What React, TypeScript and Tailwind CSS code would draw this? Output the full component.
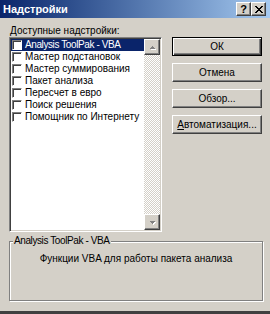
import React from "react";

const ITEMS = [
  "Analysis ToolPak - VBA",
  "Мастер подстановок",
  "Мастер суммирования",
  "Пакет анализа",
  "Пересчет в евро",
  "Поиск решения",
  "Помощник по Интернету",
];

const raised =
  "border border-t-white border-l-white border-r-[#404040] border-b-[#404040] shadow-[inset_-1px_-1px_#808080,inset_1px_1px_#d4d0c8]";

function Check() {
  return (
    <span className="shrink-0 w-[10px] h-[10px] bg-white border border-t-[#808080] border-l-[#808080] border-r-white border-b-white shadow-[inset_1px_1px_#404040]" />
  );
}

function Arrow({ down }: { down?: boolean }) {
  return (
    <div className={`w-[16px] h-[16px] bg-[#d4d0c8] flex items-center justify-center ${raised}`}>
      <svg width="7" height="5" viewBox="0 0 7 5" shapeRendering="crispEdges">
        {down ? (
          <>
            <path d="M1 1h5v1H1zM2 2h3v1H2zM3 3h1v1H3z" fill="#ffffff" transform="translate(1 1)" />
            <path d="M0 0h5v1H0zM1 1h3v1H1zM2 2h1v1H2z" fill="#808080" transform="translate(1 1)" />
          </>
        ) : (
          <>
            <path d="M3 1h1v1H3zM2 2h3v1H2zM1 3h5v1H1z" fill="#ffffff" transform="translate(1 1)" />
            <path d="M2 0h1v1H2zM1 1h3v1H1zM0 2h5v1H0z" fill="#808080" transform="translate(1 1)" />
          </>
        )}
      </svg>
    </div>
  );
}

function Btn({ children, primary }: { children: React.ReactNode; primary?: boolean }) {
  return (
    <button
      className={`h-[19px] w-full bg-[#d4d0c8] text-[10px] leading-none flex items-center justify-center ${
        primary
          ? "border border-black shadow-[inset_1px_1px_#ffffff,inset_-1px_-1px_#404040,inset_-2px_-2px_#808080]"
          : raised
      }`}
    >
      {children}
    </button>
  );
}

export default function App() {
  return (
    <div className="w-[270px] h-[314px] bg-[#d4d0c8] flex flex-col text-black text-[10px] font-['Liberation_Sans',Arial,sans-serif] border-b-[3px] border-b-[#404040]">
      {/* title bar */}
      <div className="h-[18px] shrink-0 flex items-center justify-between pl-[3px] pr-[4px] bg-gradient-to-r from-[#0a246a] to-[#a6caf0]">
        <span className="text-white font-bold text-[11px] leading-none">Надстройки</span>
        <div className="flex">
          <div className={`w-[15px] h-[14px] bg-[#d4d0c8] flex items-center justify-center font-bold text-[11px] leading-none ${raised}`}>
            ?
          </div>
          <div className={`w-[15px] h-[14px] bg-[#d4d0c8] flex items-center justify-center ${raised}`}>
            <svg width="8" height="7" viewBox="0 0 8 7" shapeRendering="crispEdges">
              <path
                d="M0 0h2v1H0zM6 0h2v1H6zM1 1h2v1H1zM5 1h2v1H5zM2 2h4v1H2zM3 3h2v1H3zM2 4h4v1H2zM1 5h2v1H1zM5 5h2v1H5zM0 6h2v1H0zM6 6h2v1H6z"
                fill="#000"
              />
            </svg>
          </div>
        </div>
      </div>

      {/* body */}
      <div className="flex-1 flex flex-col pt-[7px] pl-[9px] pr-[7px]">
        <div className="flex gap-[10px]">
          <div className="w-[153px] flex flex-col">
            <div className="h-[12px] leading-[12px] pl-[1px]">
              <span className="underline">Д</span>оступные надстройки:
            </div>
            <div className="h-[195px] flex bg-white border border-t-[#808080] border-l-[#808080] border-b-white border-r-white shadow-[inset_1px_1px_#404040,inset_-1px_-1px_#d4d0c8] p-[1px]">
              <div className="flex-1 flex flex-col">
                {ITEMS.map((it, i) => (
                  <div
                    key={it}
                    className={`h-[12px] flex items-center gap-[3px] pl-[1px] ${i === 0 ? "bg-[#0a246a] text-white" : ""}`}
                  >
                    <Check />
                    <span className={`leading-none whitespace-nowrap ${i === 0 ? "tracking-[-0.4px]" : ""}`}>{it}</span>
                  </div>
                ))}
              </div>
              <div className="w-[16px] flex flex-col bg-[repeating-conic-gradient(#ffffff_0%_25%,#d4d0c8_0%_50%)] bg-size-[2px_2px]">
                <Arrow />
                <div className="flex-1" />
                <Arrow down />
              </div>
            </div>
          </div>
          <div className="w-[90px] pt-[12px] flex flex-col gap-[7px]">
            <Btn primary>ОК</Btn>
            <Btn>Отмена</Btn>
            <Btn>Обзор...</Btn>
            <Btn>
              <span className="underline">А</span>втоматизация...
            </Btn>
          </div>
        </div>

        <fieldset className="mt-[3px] h-[66px] border border-[#808080] shadow-[1px_1px_#ffffff,inset_1px_1px_#ffffff] px-[2px]">
          <legend className="ml-[1px] px-[1px] leading-[12px] bg-[#d4d0c8] tracking-[-0.4px]">Analysis ToolPak - VBA</legend>
          <div className="text-center leading-[12px] pt-[6px]">Функции VBA для работы пакета анализа</div>
        </fieldset>
      </div>
    </div>
  );
}
